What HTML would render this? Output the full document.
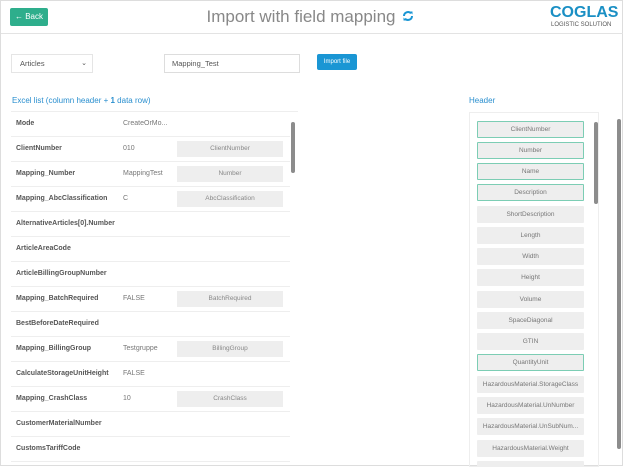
<!DOCTYPE html>
<html><head><style>
*{margin:0;padding:0;box-sizing:border-box}
body{width:623px;height:466px;overflow:hidden;background:#fff;font-family:"Liberation Sans",sans-serif;position:relative;border:1px solid #ddd}
.abs{position:absolute}
.back{left:9px;top:7px;width:38px;height:18px;background:#2eae8c;border-radius:2px;color:#fff;font-size:8px;line-height:18px;text-align:center}
.title{left:0;width:600px;top:6px;text-align:center;font-size:17px;color:#888;font-weight:300}
.hline{left:0;top:32px;width:623px;height:1px;background:#e3e3e3}
.sel{left:10px;top:53px;width:82px;height:19px;border:1px solid #e5e5e5;font-size:7.5px;color:#555;line-height:17px;padding-left:8px}
.inp{left:163px;top:53px;width:136px;height:19px;border:1px solid #ddd;font-size:7.5px;color:#555;line-height:17px;padding-left:7px}
.imp{left:316px;top:53px;width:40px;height:16px;background:#1a96d4;border-radius:2px;color:#fff;font-size:6px;line-height:16px;text-align:center}
.lbl{font-size:8px;color:#2a8fcf;top:95px}
.lp{left:10px;top:110px;width:287px;height:356px;border-top:1px solid #eee;overflow:hidden}
.row{position:absolute;left:0;width:279px;height:25px;border-bottom:1px solid #eee;font-size:7px;color:#444}
.row .k{position:absolute;left:5px;top:8px;font-weight:bold;color:#555}
.row .v{position:absolute;left:112px;top:8px;color:#777}
.row .b{position:absolute;left:166px;top:4px;width:106px;height:16px;background:#eee;color:#888;text-align:center;line-height:16px;font-size:6.5px}
.sb{background:#8c8c8c;border-radius:2px;width:4px}
.rp{left:468px;top:111px;width:130px;height:355px;border:1px solid #eee;overflow:hidden}
.it{position:absolute;left:7px;width:107px;height:17px;background:#eee;color:#777;font-size:6.5px;text-align:center;line-height:17px;border-radius:1px}
.it.g{border:1px solid #7ccdb4;line-height:15px}
</style></head><body>
<div class="abs back">&#8592; Back</div>
<div class="abs title">Import with field mapping</div>
<svg class="abs" style="left:401px;top:9px" width="12" height="12" viewBox="0 0 12 12"><path d="M2 6a4 4 0 0 1 7-2.6M10 6a4 4 0 0 1-7 2.6" stroke="#1a96d4" stroke-width="2" fill="none"/><path d="M7.5 1.5L10.5 1.5L10.5 4.5Z M4.5 10.5L1.5 10.5L1.5 7.5Z" fill="#1a96d4"/></svg>
<div class="abs" style="left:549px;top:3px;font-size:16px;font-weight:bold;color:#1a8fc4">COGLAS</div>
<div class="abs" style="left:550px;top:21px;font-size:6px;color:#555">LOGISTIC SOLUTION</div>
<div class="abs hline"></div>
<div class="abs sel">Articles<span style="position:absolute;right:5px;top:0;font-size:7px">&#8964;</span></div>
<div class="abs inp">Mapping_Test</div>
<div class="abs imp">Import file</div>
<div class="abs lbl" style="left:11px">Excel list (column header + <b>1</b> data row)</div>
<div class="abs lbl" style="left:468px">Header</div>
<div class="abs lp">
<div class="row" style="top:0"><span class="k">Mode</span><span class="v">CreateOrMo...</span></div>
<div class="row" style="top:25px"><span class="k">ClientNumber</span><span class="v">010</span><span class="b">ClientNumber</span></div>
<div class="row" style="top:50px"><span class="k">Mapping_Number</span><span class="v">MappingTest</span><span class="b">Number</span></div>
<div class="row" style="top:75px"><span class="k">Mapping_AbcClassification</span><span class="v">C</span><span class="b">AbcClassification</span></div>
<div class="row" style="top:100px"><span class="k">AlternativeArticles[0].Number</span></div>
<div class="row" style="top:125px"><span class="k">ArticleAreaCode</span></div>
<div class="row" style="top:150px"><span class="k">ArticleBillingGroupNumber</span></div>
<div class="row" style="top:175px"><span class="k">Mapping_BatchRequired</span><span class="v">FALSE</span><span class="b">BatchRequired</span></div>
<div class="row" style="top:200px"><span class="k">BestBeforeDateRequired</span></div>
<div class="row" style="top:225px"><span class="k">Mapping_BillingGroup</span><span class="v">Testgruppe</span><span class="b">BillingGroup</span></div>
<div class="row" style="top:250px"><span class="k">CalculateStorageUnitHeight</span><span class="v">FALSE</span></div>
<div class="row" style="top:275px"><span class="k">Mapping_CrashClass</span><span class="v">10</span><span class="b">CrashClass</span></div>
<div class="row" style="top:300px"><span class="k">CustomerMaterialNumber</span></div>
<div class="row" style="top:325px"><span class="k">CustomsTariffCode</span></div>
<div class="abs sb" style="left:280px;top:10px;height:51px"></div>
</div>
<div class="abs rp">
<div class="it g" style="top:8px">ClientNumber</div>
<div class="it g" style="top:29px">Number</div>
<div class="it g" style="top:50px">Name</div>
<div class="it g" style="top:71px">Description</div>
<div class="it" style="top:93px">ShortDescription</div>
<div class="it" style="top:114px">Length</div>
<div class="it" style="top:135px">Width</div>
<div class="it" style="top:156px">Height</div>
<div class="it" style="top:178px">Volume</div>
<div class="it" style="top:199px">SpaceDiagonal</div>
<div class="it" style="top:220px">GTIN</div>
<div class="it g" style="top:241px">QuantityUnit</div>
<div class="it" style="top:263px">HazardousMaterial.StorageClass</div>
<div class="it" style="top:284px">HazardousMaterial.UnNumber</div>
<div class="it" style="top:305px">HazardousMaterial.UnSubNum...</div>
<div class="it" style="top:327px">HazardousMaterial.Weight</div>
<div class="it" style="top:348px"></div>
<div class="abs sb" style="left:124px;top:9px;height:82px"></div>
</div>
<div class="abs sb" style="left:616px;top:118px;height:330px"></div>
</body></html>
